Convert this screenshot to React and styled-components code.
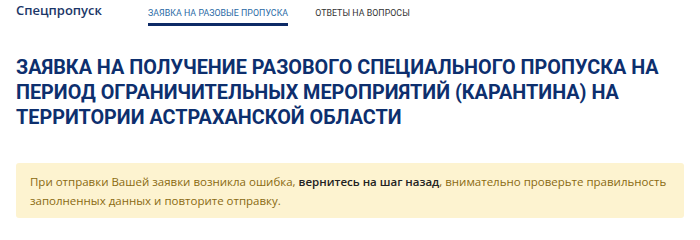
import React from "react";
import styled, { createGlobalStyle } from "styled-components";

const Global = createGlobalStyle`
  html, body { margin: 0; padding: 0; background: #fff; }
  body { font-family: "Open Sans", "Noto Sans", sans-serif; }
`;

const Page = styled.div`
  width: 700px;
  padding: 0 16px;
  box-sizing: border-box;
`;

const TopBar = styled.header`
  display: flex;
  align-items: flex-start;
  height: 28px;
`;

const Brand = styled.div`
  font-size: 13px;
  font-weight: 600;
  color: #1b3668;
  padding-top: 1px;
  width: 132px;
`;

const Tab = styled.a`
  display: block;
  font-family: Roboto, "Open Sans", sans-serif;
  font-size: 8.8px;
  letter-spacing: 0.05px;
  text-transform: uppercase;
  color: ${(p) => (p.$active ? "#2a6aa5" : "#333")};
  padding-top: 8px;
  padding-bottom: 5px;
  margin-right: 27px;
  border-bottom: 3px solid ${(p) => (p.$active ? "#0d2a66" : "transparent")};
  text-decoration: none;
`;

const Title = styled.h1`
  margin: 27px 0 0;
  font-family: Roboto, "Open Sans", sans-serif;
  font-size: 19.8px;
  line-height: 25px;
  font-weight: 700;
  color: #0d2f6e;
  text-transform: uppercase;
`;

const Alert = styled.div`
  margin-top: 33px;
  background: #fdf3d0;
  border-radius: 3px;
  padding: 9px 14px 8px;
  font-size: 11.5px;
  line-height: 19px;
  color: #8a6a10;
`;

const Strong = styled.b`
  color: #222;
  font-weight: 600;
`;

export default function App() {
  return (
    <>
      <Global />
      <Page>
        <TopBar>
          <Brand>Спецпропуск</Brand>
          <Tab $active>Заявка на разовые пропуска</Tab>
          <Tab>Ответы на вопросы</Tab>
        </TopBar>
        <Title>
          Заявка на получение разового специального пропуска на период
          ограничительных мероприятий (карантина) на территории Астраханской
          области
        </Title>
        <Alert>
          При отправки Вашей заявки возникла ошибка,{" "}
          <Strong>вернитесь на шаг назад</Strong>, внимательно проверьте
          правильность заполненных данных и повторите отправку.
        </Alert>
      </Page>
    </>
  );
}
